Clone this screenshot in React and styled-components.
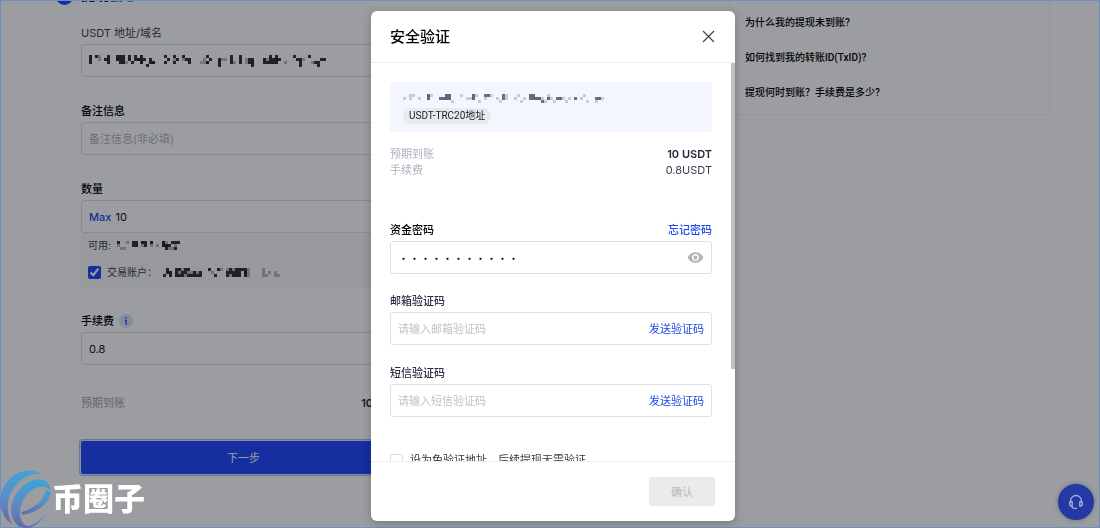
import React from 'react'
import styled, { createGlobalStyle } from 'styled-components'
import { MdVisibility } from 'react-icons/md'


const GlobalStyle = createGlobalStyle`
    * {
        box-sizing: border-box;
    }
    body {
        margin: 0;
        font-family: Inter, "Noto Sans CJK SC", sans-serif;
        font-size: 11px;
        line-height: 16px;
        color: #10131c;
    }
    input, button {
        font: inherit;
        color: inherit;
    }
`;

const Page = styled.div`
    min-height: 100vh;
    overflow: hidden;
    background: #ffffff;
    padding: 0 50px 0 81px;
    display: flex;
    justify-content: space-between;
    align-items: flex-start;
`;

const Form = styled.form`
    flex: 0 1 325px;
    min-width: 0;
    display: flex;
    flex-direction: column;
`;

const StepTitle = styled.h2`
    display: flex;
    align-items: flex-start;
    gap: 8px;
    height: 17px;
    margin: -12px 0 20px -25px;
    font-size: 14px;
    font-weight: 700;
    line-height: 14px;
`;

const StepDot = styled.span`
    width: 17px;
    height: 17px;
    border-radius: 50%;
    background: #2148ff;
`;

const Field = styled.div`
    display: flex;
    flex-direction: column;
    gap: 3px;
    margin-bottom: ${({ $gap }) => $gap || 26}px;
`;

const LabelRow = styled.div`
    display: flex;
    align-items: center;
    justify-content: ${({ $spread }) => ($spread ? 'space-between' : 'flex-start')};
    gap: 5px;
    height: 16px;
`;

const Label = styled.label`
    font-weight: ${({ $weight }) => $weight || 500};
    color: ${({ $color }) => $color || '#000000'};
`;

const InputBox = styled.div`
    height: 33px;
    display: flex;
    align-items: center;
    gap: 4px;
    padding: 0 7px;
    border: 1px solid #dfe0e3;
    border-radius: 3px;
`;

const Input = styled.input`
    flex: 1;
    min-width: 0;
    padding: 0;
    border: none;
    outline: none;
    background: transparent;
    &::placeholder {
        color: ${({ $hint }) => $hint || '#c2c2c4'};
        opacity: 1;
    }
    &[type="password"] {
        font-family: "Noto Sans CJK SC", sans-serif;
    }
`;

const TextButton = styled.button`
    padding: 0;
    border: none;
    background: none;
    color: #2348e8;
    font-weight: ${({ $weight }) => $weight || 400};
    cursor: pointer;
`;

const TextLink = styled.a`
    color: #2348e8;
    font-weight: 500;
    text-decoration: none;
`;

const Balance = styled.div`
    margin-top: -3px;
    height: 54px;
    padding: 4px 7px 7px;
    background: #f8f8fa;
    display: flex;
    flex-direction: column;
    justify-content: space-between;
    font-size: 10px;
    color: #3a3e4a;
`;

const BalanceRow = styled.div`
    display: flex;
    align-items: center;
    gap: 6px;
`;

const Tick = styled.input`
    width: 13px;
    height: 13px;
    margin: 0;
    accent-color: #2148ff;
`;

const InfoBadge = styled.span`
    display: flex;
    width: 14px;
    height: 14px;
    border-radius: 50%;
    background: #dbe3ff;
`;

const Summary = styled.div`
    display: flex;
    justify-content: space-between;
    margin: 4px 0 30px;
    color: #a3a3ad;
`;

const Strong = styled.span`
    font-weight: 600;
    color: #23273c;
`;

const Submit = styled.button`
    height: 33px;
    border: none;
    border-radius: 2px;
    background: #2148ff;
    color: #ffffff;
    box-shadow: 0 0 0 1px #dde6ff, 0 0 0 2px #a9bfee;
`;

const Faq = styled.ul`
    flex: 0 1 320px;
    list-style: none;
    margin: 0;
    padding: 5px 14px 4px;
    border: 1px solid #f4f4f5;
    border-top: none;
    font-family: Roboto, "Noto Sans CJK SC", sans-serif;
    font-size: 10px;
    font-weight: 500;
    line-height: 35px;
    color: #000000;
`;

const Overlay = styled.div`
    position: fixed;
    inset: 0;
    display: flex;
    justify-content: center;
    padding: 10px 0 6px 6px;
    border: 1px solid #6c8fc8;
    background: rgba(8, 10, 18, 0.4);
`;

const Modal = styled.section`
    width: 364px;
    display: flex;
    flex-direction: column;
    overflow: hidden;
    border-radius: 6px;
    background: #ffffff;
    box-shadow: 0 2px 8px rgba(0, 0, 0, 0.25);
`;

const ModalHeader = styled.header`
    flex: none;
    display: flex;
    align-items: center;
    justify-content: space-between;
    height: 52px;
    padding: 0 20px 0 19px;
    border-bottom: 1px solid #eeeeee;
`;

const ModalTitle = styled.h1`
    margin: 0;
    font-size: 15px;
    font-weight: 500;
    color: #000000;
`;

const CloseButton = styled.button`
    display: flex;
    padding: 0;
    border: none;
    background: none;
    cursor: pointer;
`;

const ModalMain = styled.div`
    flex: 1;
    min-height: 0;
    display: flex;
    overflow: hidden;
`;

const ModalContent = styled.div`
    flex: 1;
    padding: 19px 19px 0;
`;

const ScrollThumb = styled.div`
    width: 4px;
    height: 77%;
    background: #c1c1c1;
`;

const AddressCard = styled.div`
    height: 50px;
    padding: 12px 13px 8px;
    background: #f3f6ff;
    display: flex;
    flex-direction: column;
    align-items: flex-start;
    justify-content: space-between;
`;

const Pill = styled.span`
    padding: 0 6px;
    border-radius: 8px;
    background: #e9eaed;
    font-family: Roboto, "Noto Sans CJK SC", sans-serif;
    font-size: 10px;
    color: #1a1c24;
`;

const Totals = styled.dl`
    display: grid;
    grid-template-columns: 1fr auto;
    margin: 14px 0 44px;
    color: #b0afc0;
`;

const Amount = styled.dd`
    margin: 0;
    text-align: right;
    font-weight: ${({ $strong }) => ($strong ? 600 : 400)};
    color: ${({ $strong }) => ($strong ? '#23273c' : '#3a3e50')};
`;

const SkipRow = styled.label`
    display: flex;
    align-items: center;
    gap: 7px;
    margin-top: 35px;
    color: #33363f;
`;

const EmptyTick = styled.input`
    appearance: none;
    width: 13px;
    height: 13px;
    margin: 0;
    border: 1px solid #dcdcdc;
    border-radius: 2px;
`;

const ModalFooter = styled.footer`
    flex: none;
    display: flex;
    align-items: center;
    justify-content: flex-end;
    height: 60px;
    padding: 0 20px;
    border-top: 1px solid #eeeeee;
`;

const Confirm = styled.button`
    width: 66px;
    height: 29px;
    border: none;
    border-radius: 2px;
    background: #ebebeb;
    color: #b8b8b8;
`;

const SupportButton = styled.button`
    position: fixed;
    right: 6px;
    bottom: 8px;
    width: 36px;
    height: 36px;
    display: flex;
    align-items: center;
    justify-content: center;
    border: none;
    border-radius: 50%;
    background: #2339a3;
    box-shadow: 0 0 4px rgba(30, 40, 90, 0.4);
`;

const Brand = styled.div`
    position: fixed;
    left: 0;
    bottom: 0;
    height: 58px;
    display: flex;
    align-items: center;
    color: #ffffff;
    font-size: 31px;
    font-weight: 900;
    line-height: 32px;
`;

// Each hex digit is one column, its bits are the rows from top to bottom.
const Mosaic = ({ dark, light = '', rows = 4, color = '#000000' }) => {
    const cells = (code, opacity) =>
        [...code].flatMap((digit, col) =>
            [0, 1, 2, 3]
                .filter((row) => parseInt(digit, 16) & (1 << row))
                .map((row) => (
                    <rect
                        key={`${opacity}-${col}-${row}`}
                        x={col * 3}
                        y={row * 3}
                        width="3"
                        height="3"
                        fillOpacity={opacity}
                    />
                ))
        )
    return (
        <svg width={Math.max(dark.length, light.length) * 3} height={rows * 3} fill={color} aria-hidden="true">
            {cells(light, 0.25)}
            {cells(dark, 0.8)}
        </svg>
    )
}

const BrandLogo = () => (
    <svg width="52" height="58" viewBox="0 0 52 58" aria-hidden="true">
        <defs>
            <linearGradient id="brand" x1="0" y1="0" x2="0" y2="1">
                <stop offset="0" stopColor="#3ba5d6" />
                <stop offset="0.5" stopColor="#5b8cc6" />
                <stop offset="1" stopColor="#6668a8" />
            </linearGradient>
        </defs>
        <g fill="url(#brand)">
            <path d="M42 4C31-2 16 0 7 12C0 21-2 34 3 43C5 49 9 52 12 54C6 43 6 29 14 18C21 8 31 3 42 4Z" />
            <path d="M51 21C50 9 38 6 27 13C14 21 8 37 13 49C16 56 23 60 33 57C24 57 20 51 20 44C20 31 29 19 39 17C45 16 49 18 51 21Z" />
            <path d="M51 22C50 32 39 42 23 45L21 42C34 39 43 31 46 20Z" />
            <path d="M46 43C42 51 36 56 28 58H23C33 56 41 50 46 43Z" />
        </g>
    </svg>
)

const CodeField = ({ id, label, placeholder }) => (
    <Field $gap={20}>
        <Label htmlFor={id} $color="#2b3144">{label}</Label>
        <InputBox>
            <Input id={id} placeholder={placeholder} />
            <TextButton type="button">发送验证码</TextButton>
        </InputBox>
    </Field>
)

const WithdrawForm = () => (
    <Form>
        <StepTitle><StepDot />提现信息</StepTitle>
        <Field>
            <Label htmlFor="address" $weight={400} $color="#3a3e4a">USDT 地址/域名</Label>
            <InputBox>
                <Mosaic
                    dark="7010027003770343272864000520520126000005200e00070070 6e000647672000012e00104c22"
                    light="000300000200400024000400000020020000046400002200400060400002002004000002004"
                />
                <Input id="address" />
            </InputBox>
        </Field>
        <Field>
            <Label htmlFor="note">备注信息</Label>
            <InputBox><Input id="note" placeholder="备注信息(非必填)" $hint="#b4b4b8" /></InputBox>
        </Field>
        <Field>
            <Label htmlFor="amount">数量</Label>
            <InputBox>
                <TextButton type="button" $weight={500}>Max</TextButton>
                <Input id="amount" defaultValue="10" />
            </InputBox>
            <Balance>
                <BalanceRow>
                    可用:
                    <Mosaic rows={3} dark="100003301301000362151" light="244100003003020334420" />
                </BalanceRow>
                <BalanceRow>
                    <Tick type="checkbox" id="account" defaultChecked />
                    <label htmlFor="account">交易账户：</label>
                    <Mosaic
                        rows={3}
                        dark="436075635464600104100636771700000000000"
                        light="002002142202000020010141000270000742064"
                    />
                </BalanceRow>
            </Balance>
        </Field>
        <Field>
            <LabelRow>
                <Label htmlFor="fee">手续费</Label>
                <InfoBadge>
                    <svg width="14" height="14" viewBox="0 0 14 14" stroke="#2148ff" strokeWidth="1.3" fill="none">
                        <path d="M7 3V4.4M5.8 6.3H7.2V10.8" />
                    </svg>
                </InfoBadge>
            </LabelRow>
            <InputBox><Input id="fee" defaultValue="0.8" /></InputBox>
        </Field>
        <Summary>
            <span>预期到账</span>
            <Strong>10 USDT</Strong>
        </Summary>
        <Submit type="button">下一步</Submit>
    </Form>
)

const App = () => {
    return (
        <>
            <GlobalStyle />
            <Page>
                <WithdrawForm />
                <Faq>
                    <li>为什么我的提现未到账?</li>
                    <li>如何找到我的转账ID(TxID)?</li>
                    <li>提现何时到账？手续费是多少?</li>
                </Faq>
            </Page>
            <Overlay>
                <Modal role="dialog" aria-labelledby="modal-title">
                    <ModalHeader>
                        <ModalTitle id="modal-title">安全验证</ModalTitle>
                        <CloseButton type="button" aria-label="关闭">
                            <svg width="13" height="13" viewBox="0 0 13 13" stroke="#444444" strokeWidth="1.2">
                                <path d="M1 1L12 12M12 1L1 12" />
                            </svg>
                        </CloseButton>
                    </ModalHeader>
                    <ModalMain>
                        <ModalContent>
                            <AddressCard>
                                <Mosaic
                                    rows={3}
                                    color="#4a4e60"
                                    dark="0000000030002233000000030001100003000000003322402002200002000000220"
                                    light="2031020031002233400102231402110240300214200322243240224200021400422"
                                />
                                <Pill>USDT-TRC20地址</Pill>
                            </AddressCard>
                            <Totals>
                                <dt>预期到账</dt>
                                <Amount $strong>10 USDT</Amount>
                                <dt>手续费</dt>
                                <Amount>0.8USDT</Amount>
                            </Totals>
                            <Field $gap={19}>
                                <LabelRow $spread>
                                    <Label htmlFor="password">资金密码</Label>
                                    <TextLink href="#forgot">忘记密码</TextLink>
                                </LabelRow>
                                <InputBox>
                                    <Input id="password" type="password" defaultValue="abcdefghijk" />
                                    <MdVisibility size={17} color="#b3b3b3" />
                                </InputBox>
                            </Field>
                            <CodeField id="mail-code" label="邮箱验证码" placeholder="请输入邮箱验证码" />
                            <CodeField id="sms-code" label="短信验证码" placeholder="请输入短信验证码" />
                            <SkipRow>
                                <EmptyTick type="checkbox" />
                                设为免验证地址，后续提现无需验证
                            </SkipRow>
                        </ModalContent>
                        <ScrollThumb />
                    </ModalMain>
                    <ModalFooter>
                        <Confirm type="button" disabled>确认</Confirm>
                    </ModalFooter>
                </Modal>
            </Overlay>
            <Brand><BrandLogo />币圈子</Brand>
            <SupportButton type="button" aria-label="客服">
                <svg width="16" height="16" viewBox="0 0 16 16" fill="none" stroke="#a9b3d8" strokeWidth="1.3">
                    <path d="M2.5 8V7A5.5 5.5 0 0 1 13.5 7V8" />
                    <path d="M2 8H4.2V12H3.2A1.5 1.5 0 0 1 1.7 10.5V8.3ZM14 8H11.8V12H12.8A1.5 1.5 0 0 0 14.3 10.5V8.3Z" />
                    <path d="M3.5 12.3C4 13.8 5 14.3 6.3 14.3H9" />
                </svg>
            </SupportButton>
        </>
    )
}

export default App
